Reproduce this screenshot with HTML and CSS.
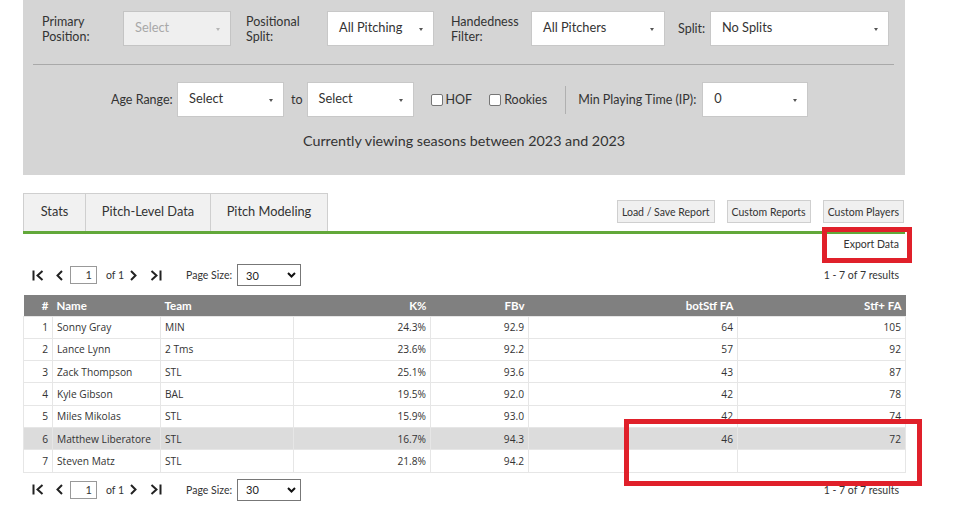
FILE: index.html
```html
<!DOCTYPE html>
<html lang="en">
<head>
<meta charset="utf-8">
<title>Leaderboard</title>
<link rel="stylesheet" href="styles.css">
</head>
<body>
<div class="page">
  <section class="filters">
    <div class="frow frow-top">
      <label class="flabel lab-primary">Primary<br>Position:</label>
      <div class="sel sel-disabled w108"><span>Select</span><i class="caret"></i></div>
      <label class="flabel lab-pos">Positional<br>Split:</label>
      <div class="sel w107"><span>All Pitching</span><i class="caret"></i></div>
      <label class="flabel lab-hand">Handedness<br>Filter:</label>
      <div class="sel w134"><span>All Pitchers</span><i class="caret"></i></div>
      <label class="flabel lab-split">Split:</label>
      <div class="sel w179"><span>No Splits</span><i class="caret"></i></div>
    </div>
    <div class="fdivider"></div>
    <div class="frow frow-age">
      <span class="ilabel age-label">Age Range:</span>
      <div class="sel w107"><span>Select</span><i class="caret"></i></div>
      <span class="to">to</span>
      <div class="sel w107"><span>Select</span><i class="caret"></i></div>
      <span class="check"><i class="box"></i>HOF</span>
      <span class="check"><i class="box"></i>Rookies</span>
      <i class="vsep"></i>
      <span class="ilabel min-label">Min Playing Time (IP):</span>
      <div class="sel w106 min-sel"><span>0</span><i class="caret"></i></div>
    </div>
    <p class="viewing">Currently viewing seasons between 2023 and 2023</p>
  </section>

  <div class="tabbar">
    <div class="tabs">
      <div class="tab tab-stats">Stats</div>
      <div class="tab tab-pitch">Pitch-Level Data</div>
      <div class="tab tab-model">Pitch Modeling</div>
    </div>
    <div class="actions">
      <button class="btn">Load / Save Report</button>
      <button class="btn">Custom Reports</button>
      <button class="btn">Custom Players</button>
    </div>
  </div>

  <div class="export-row">Export Data</div>

  <div class="pager pager-top">
    <div class="pager-left">
      <svg class="pi pi-first" width="12" height="11" viewBox="0 0 12 11"><path d="M1.5 0.5v10M10.5 1L5.5 5.5l5 4.5" fill="none" stroke="#222" stroke-width="2"/></svg>
      <svg class="pi pi-prev" width="7" height="11" viewBox="0 0 7 11"><path d="M6 1L1.5 5.5 6 10" fill="none" stroke="#222" stroke-width="2"/></svg>
      <span class="pin">1</span>
      <span class="of">of 1</span>
      <svg class="pi pi-next" width="7" height="11" viewBox="0 0 7 11"><path d="M1 1l4.5 4.5L1 10" fill="none" stroke="#222" stroke-width="2"/></svg>
      <svg class="pi pi-last" width="12" height="11" viewBox="0 0 12 11"><path d="M1.5 1l5 4.5-5 4.5M10.5 0.5v10" fill="none" stroke="#222" stroke-width="2"/></svg>
      <span class="psize">Page Size:</span>
      <span class="psel"><span>30</span><svg width="9" height="6" viewBox="0 0 9 6"><path d="M1 1l3.5 3.5L8 1" fill="none" stroke="#111" stroke-width="2"/></svg></span>
    </div>
    <span class="results">1 - 7 of 7 results</span>
  </div>

  <table class="grid">
    <colgroup>
      <col class="c-num"><col class="c-name"><col class="c-team"><col class="c-k"><col class="c-fbv"><col class="c-bot"><col class="c-stf">
    </colgroup>
    <thead>
      <tr><th class="r">#</th><th class="l">Name</th><th class="l">Team</th><th class="r">K%</th><th class="r">FBv</th><th class="r">botStf FA</th><th class="r">Stf+ FA</th></tr>
    </thead>
    <tbody>
      <tr><td class="r">1</td><td>Sonny Gray</td><td>MIN</td><td class="r">24.3%</td><td class="r">92.9</td><td class="r">64</td><td class="r">105</td></tr>
      <tr><td class="r">2</td><td>Lance Lynn</td><td>2 Tms</td><td class="r">23.6%</td><td class="r">92.2</td><td class="r">57</td><td class="r">92</td></tr>
      <tr><td class="r">3</td><td>Zack Thompson</td><td>STL</td><td class="r">25.1%</td><td class="r">93.6</td><td class="r">43</td><td class="r">87</td></tr>
      <tr><td class="r">4</td><td>Kyle Gibson</td><td>BAL</td><td class="r">19.5%</td><td class="r">92.0</td><td class="r">42</td><td class="r">78</td></tr>
      <tr><td class="r">5</td><td>Miles Mikolas</td><td>STL</td><td class="r">15.9%</td><td class="r">93.0</td><td class="r">42</td><td class="r">74</td></tr>
      <tr class="hl"><td class="r">6</td><td>Matthew Liberatore</td><td>STL</td><td class="r">16.7%</td><td class="r">94.3</td><td class="r">46</td><td class="r">72</td></tr>
      <tr><td class="r">7</td><td>Steven Matz</td><td>STL</td><td class="r">21.8%</td><td class="r">94.2</td><td class="r"></td><td class="r"></td></tr>
    </tbody>
  </table>

  <div class="pager pager-bottom">
    <div class="pager-left">
      <svg class="pi pi-first" width="12" height="11" viewBox="0 0 12 11"><path d="M1.5 0.5v10M10.5 1L5.5 5.5l5 4.5" fill="none" stroke="#222" stroke-width="2"/></svg>
      <svg class="pi pi-prev" width="7" height="11" viewBox="0 0 7 11"><path d="M6 1L1.5 5.5 6 10" fill="none" stroke="#222" stroke-width="2"/></svg>
      <span class="pin">1</span>
      <span class="of">of 1</span>
      <svg class="pi pi-next" width="7" height="11" viewBox="0 0 7 11"><path d="M1 1l4.5 4.5L1 10" fill="none" stroke="#222" stroke-width="2"/></svg>
      <svg class="pi pi-last" width="12" height="11" viewBox="0 0 12 11"><path d="M1.5 1l5 4.5-5 4.5M10.5 0.5v10" fill="none" stroke="#222" stroke-width="2"/></svg>
      <span class="psize">Page Size:</span>
      <span class="psel"><span>30</span><svg width="9" height="6" viewBox="0 0 9 6"><path d="M1 1l3.5 3.5L8 1" fill="none" stroke="#111" stroke-width="2"/></svg></span>
    </div>
    <span class="results">1 - 7 of 7 results</span>
  </div>

  <div class="mark mark-export"></div>
  <div class="mark mark-cells"></div>
</div>
</body>
</html>
```

FILE: styles.css
```css
* { box-sizing: border-box; }
html, body { margin: 0; padding: 0; background: #fff; }
body { font-family: Lato, "Liberation Sans", sans-serif; color: #333; }
.page { position: relative; width: 954px; height: 517px; overflow: hidden; }

/* filter panel */
.filters { margin-left: 23px; width: 882px; height: 175px; background: #d5d5d5; padding-top: 11px; }
.frow { display: flex; align-items: center; height: 35px; }
.frow-top { padding-left: 19px; }
.flabel { font-size: 12.5px; line-height: 15px; color: #333; flex: none; }
.lab-primary { width: 81px; }
.lab-pos { margin-left: 15px; width: 81px; }
.lab-hand { margin-left: 17px; width: 80px; }
.lab-split { margin-left: 13px; width: 32px; }

.sel { flex: none; height: 35px; background: #fff; border: 1px solid #c8c8c8; display: flex; align-items: center; justify-content: space-between; padding: 0 10px 3px 11px; font-size: 12.8px; color: #333; }
.sel-disabled { background: #efefef; color: #a8a8a8; border-color: #c4c4c4; }
.caret { display: block; width: 0; height: 0; border-left: 2.5px solid transparent; border-right: 2.5px solid transparent; border-top: 3px solid #555; margin-top: 4px; }
.sel-disabled .caret { border-top-color: #b5b5b5; }
.w106 { width: 106px; }
.w107 { width: 107px; }
.w108 { width: 108px; }
.w134 { width: 134px; }
.w179 { width: 179px; }

.fdivider { margin: 18px 0 0 10px; width: 861px; height: 1px; background: #a9a9a9; }
.frow-age { margin-top: 17px; padding-left: 88px; }
.ilabel { font-size: 12.5px; color: #333; white-space: nowrap; }
.age-label { width: 66px; }
.to { font-size: 12.5px; margin: 0 4px 0 7px; }
.check { display: flex; align-items: center; font-size: 12.5px; margin-left: 17px; }
.box { display: block; width: 12px; height: 12px; background: #fff; border: 1px solid #767676; border-radius: 2px; margin-right: 3px; }
.vsep { display: block; width: 1px; height: 28px; background: #b0b0b0; margin-left: 18px; }
.min-label { margin-left: 12px; }
.min-sel { margin-left: 6px; }
.viewing { margin: 15px 0 0; text-align: center; font-size: 14.3px; line-height: 18px; color: #333; }

/* tabs */
.tabbar { margin: 18px 0 0 23px; width: 882px; display: flex; justify-content: space-between; align-items: flex-end; border-bottom: 3px solid #62a83a; }
.tabs { display: flex; }
.tab { height: 38px; display: flex; align-items: center; justify-content: center; padding-bottom: 3px; background: #f1f1f1; border: 1px solid #cfcfcf; border-bottom: none; font-size: 12.8px; color: #333; }
.tab + .tab { border-left: none; }
.tab-stats { width: 63px; }
.tab-pitch { width: 125px; }
.tab-model { width: 117px; }
.actions { display: flex; gap: 12px; margin: 0 1px 8px 0; }
.btn { height: 23px; padding: 0 4px; background: #f0f0f0; border: 1px solid #cfcfcf; font-family: Lato, "Liberation Sans", sans-serif; font-size: 10.5px; color: #333; }

.export-row { margin-left: 23px; width: 882px; height: 20px; line-height: 20px; text-align: right; padding-right: 6px; font-size: 10.5px; color: #333; }

/* pager */
.pager { margin-left: 23px; width: 882px; height: 22px; display: flex; align-items: center; justify-content: space-between; padding: 0 6px 0 9px; }
.pager-top { margin-top: 10px; }
.pager-bottom { margin-top: 6px; }
.pager-left { display: flex; align-items: center; }
.pi { display: block; }
.pi-prev { margin-left: 12px; }
.pin { display: block; width: 27px; height: 18px; margin-left: 7px; border: 1px solid #999; background: #fff; text-align: right; padding-right: 4px; font-size: 11px; line-height: 16px; color: #333; }
.of { font-size: 10.5px; margin-left: 9px; }
.pi-next { margin-left: 6px; }
.pi-last { margin-left: 13px; }
.psize { font-size: 10.5px; margin-left: 24px; }
.psel { display: flex; align-items: center; justify-content: space-between; width: 64px; height: 22px; margin-left: 5px; border: 1px solid #777; padding: 0 4px 0 8px; font-size: 11px; color: #222; }
.results { font-size: 10.5px; color: #333; }

/* table */
.grid { margin: 9px 0 0 23px; width: 882px; border-collapse: collapse; table-layout: fixed; }
.c-num { width: 29px; }
.c-name { width: 108px; }
.c-team { width: 133px; }
.c-k { width: 137px; }
.c-fbv { width: 98px; }
.c-bot { width: 209px; }
.c-stf { width: 168px; }
.grid th { height: 21px; background: #808080; color: #fff; font-weight: 700; font-size: 11.5px; padding: 0 4px; }
.grid td { height: 22.3px; padding: 0 4px; font-family: "Open Sans", "Noto Sans", sans-serif; font-size: 10.2px; color: #333; border: 1px solid #e6e6e6; white-space: nowrap; }
.grid .r { text-align: right; }
.grid .l { text-align: left; }
.grid tr.hl td { background: #dcdcdc; }

/* red annotation boxes drawn over the screenshot */
.mark { position: absolute; border: 5px solid #e0202a; }
.mark-export { left: 822px; top: 227px; width: 90px; height: 36px; }
.mark-cells { left: 624px; top: 419px; width: 298px; height: 67px; }
```
